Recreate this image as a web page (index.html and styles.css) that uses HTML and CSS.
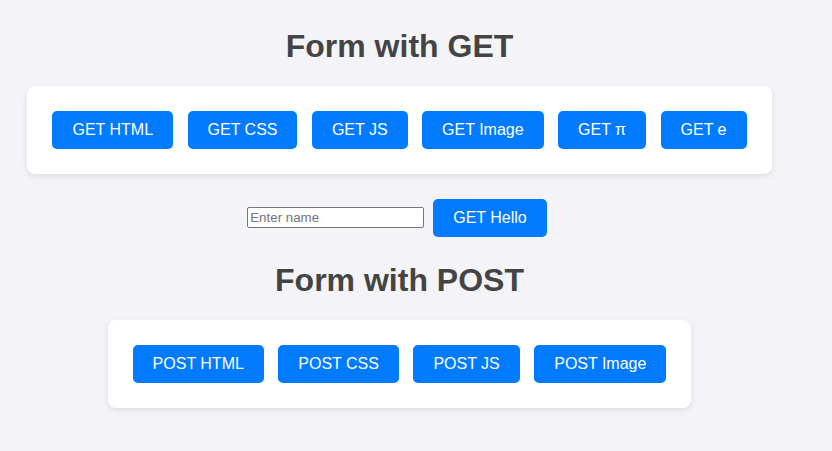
FILE: index.html
```html
<!DOCTYPE html>
<html lang="en">
<head>
<meta charset="utf-8">
<title>Forms</title>
<link rel="stylesheet" href="styles.css">
</head>
<body>
<div class="page">
  <h1 class="title">Form with GET</h1>
  <div class="card">
    <button class="btn">GET HTML</button>
    <button class="btn">GET CSS</button>
    <button class="btn">GET JS</button>
    <button class="btn">GET Image</button>
    <button class="btn">GET π</button>
    <button class="btn">GET e</button>
  </div>
  <form class="hello">
    <input class="name" type="text" placeholder="Enter name">
    <button class="btn" type="button">GET Hello</button>
  </form>
  <h1 class="title">Form with POST</h1>
  <div class="card">
    <button class="btn">POST HTML</button>
    <button class="btn">POST CSS</button>
    <button class="btn">POST JS</button>
    <button class="btn">POST Image</button>
  </div>
</div>
</body>
</html>
```
FILE: styles.css
```css
html, body {
  background: #f4f4f8;
}
body {
  margin: 8px 0 0 0;
  font-family: "Liberation Sans", Arial, sans-serif;
  font-size: 16px;
  color: #444;
}
.page {
  width: 799px;
  text-align: center;
}
.title {
  font-size: 32px;
  font-weight: bold;
  line-height: 35px;
  margin: 21.44px 0;
  color: #444;
}
.card {
  width: fit-content;
  margin: 20px auto;
  background: #fff;
  border-radius: 8px;
  box-shadow: 0 2px 6px rgba(0, 0, 0, 0.1);
  padding: 20px;
  display: flex;
  gap: 4.45px;
}
.btn {
  margin: 5px;
  padding: 10px 20px;
  border: none;
  border-radius: 5px;
  background: #007bff;
  color: #fff;
  font-family: "Liberation Sans", Arial, sans-serif;
  font-size: 16px;
  line-height: 18px;
  cursor: pointer;
}
.hello {
  display: flex;
  justify-content: center;
  align-items: center;
  gap: 4px;
  margin: 0;
}
.name {
  box-sizing: border-box;
  width: 177px;
  height: 21px;
  margin: 0;
  border: 1px solid #767676;
  border-radius: 2px;
  padding: 1px 2px;
  font-family: "Liberation Sans", Arial, sans-serif;
  font-size: 13.33px;
  background: #fff;
}
.name::placeholder {
  color: #757575;
}
```
